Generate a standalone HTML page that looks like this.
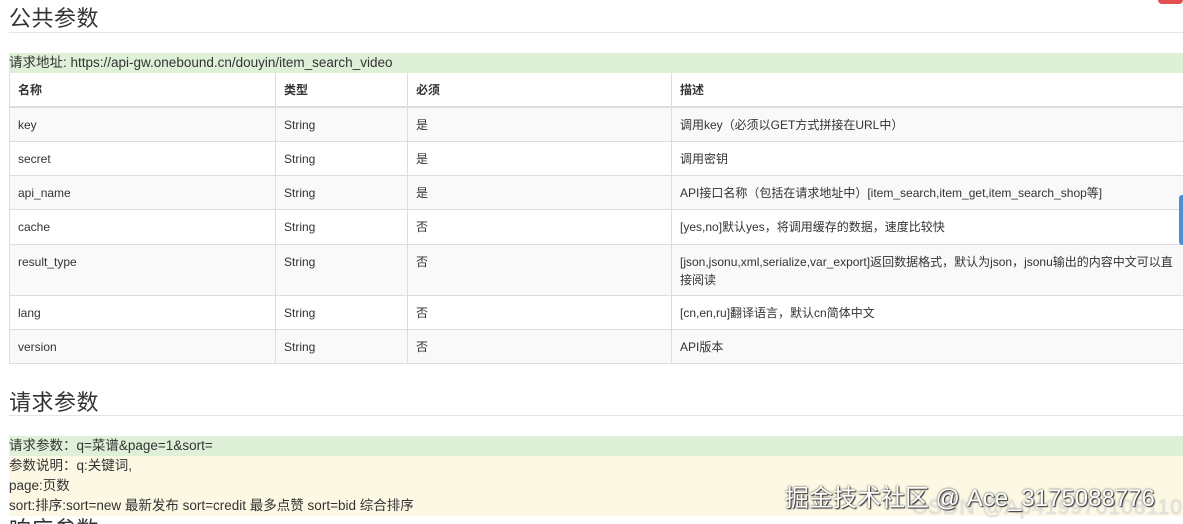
<!DOCTYPE html>
<html style="overflow:hidden;height:524px"><head><meta charset="utf-8"><style>
body{margin:0;width:1183px;height:524px;overflow:hidden;background:#fff;font-family:"Liberation Sans","Noto Sans CJK SC",sans-serif;color:#333;position:relative}
h2{position:absolute;left:9px;margin:0;font-weight:normal;font-size:22px;color:#333;letter-spacing:0.5px}
.hr{position:absolute;left:9px;right:0;height:1px;background:#e5e5e5}
.url{position:absolute;left:9px;right:0;top:53px;height:20px;background:#dff0d8;font-size:13.5px;line-height:20px;color:#333}
table{position:absolute;left:9px;top:73px;border-collapse:collapse;font-size:12px;table-layout:fixed;width:1200px}
td,th{border:1px solid #ddd;padding:0 8px;text-align:left;vertical-align:top;line-height:18px}
th{font-weight:bold;border-bottom:2px solid #ddd;height:34px;padding-top:8px;box-sizing:border-box;border-top:none}
td{padding-top:8px;box-sizing:border-box}
tr:nth-child(odd) td{background:#f9f9f9}
.box{position:absolute;left:9px;right:0;font-size:13.5px;line-height:20px;color:#333}
</style></head><body>
<h2 style="top:1px">公共参数</h2>
<div class="hr" style="top:32px"></div>
<div style="position:absolute;left:1158px;top:0;width:25px;height:4px;background:#e05050;border-radius:0 0 4px 4px"></div>
<div class="url">请求地址: https://api-gw.onebound.cn/douyin/item_search_video</div>
<table>
<colgroup><col style="width:266px"><col style="width:132px"><col style="width:264px"><col></colgroup>
<thead><tr><th>名称</th><th>类型</th><th>必须</th><th>描述</th></tr></thead>
<tbody>
<tr style="height:34px"><td>key</td><td>String</td><td>是</td><td>调用key（必须以GET方式拼接在URL中）</td></tr>
<tr style="height:34px"><td>secret</td><td>String</td><td>是</td><td>调用密钥</td></tr>
<tr style="height:34px"><td>api_name</td><td>String</td><td>是</td><td>API接口名称（包括在请求地址中）[item_search,item_get,item_search_shop等]</td></tr>
<tr style="height:35px"><td>cache</td><td>String</td><td>否</td><td>[yes,no]默认yes，将调用缓存的数据，速度比较快</td></tr>
<tr style="height:51px"><td>result_type</td><td>String</td><td>否</td><td style="padding-right:25px">[json,jsonu,xml,serialize,var_export]返回数据格式，默认为json，jsonu输出的内容中文可以直接阅读</td></tr>
<tr style="height:34px"><td>lang</td><td>String</td><td>否</td><td>[cn,en,ru]翻译语言，默认cn简体中文</td></tr>
<tr style="height:34px"><td>version</td><td>String</td><td>否</td><td>API版本</td></tr>
</tbody></table>
<div style="position:absolute;left:1179px;top:195px;width:4px;height:50px;background:#4a90d9;border-radius:3px 0 0 3px"></div>
<h2 style="top:385px">请求参数</h2>
<div class="hr" style="top:415px"></div>
<div class="box" style="top:436px;height:20px;background:#dff0d8">请求参数：q=菜谱&amp;page=1&amp;sort=</div>
<div class="box" style="top:456px;height:60px;background:#fcf8e3">参数说明：q:关键词,<br>page:页数<br>sort:排序:sort=new 最新发布 sort=credit 最多点赞 sort=bid 综合排序</div>
<h2 style="top:512px">响应参数</h2>
<div style="position:absolute;left:912px;top:496px;font-size:21px;color:rgba(255,255,255,0.6);text-shadow:0 0 1px #aaa;white-space:nowrap;letter-spacing:1px">CSDN @Ap419970108110</div>
<div style="position:absolute;left:785px;top:478px;font-size:24px;color:#fff;text-shadow:0 0 2px #333,1px 1px 1px #333;white-space:nowrap">掘金技术社区 @ Ace_3175088776</div>
</body></html>
